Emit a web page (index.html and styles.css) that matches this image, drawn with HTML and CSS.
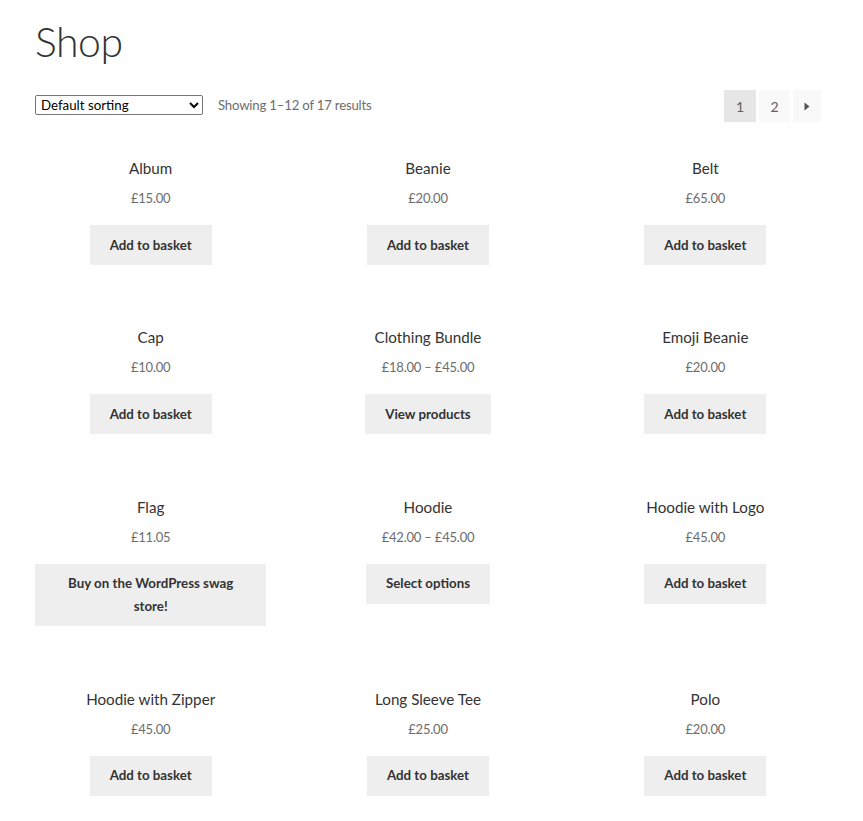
FILE: index.html
```html
<!DOCTYPE html>
<html lang="en">
<head>
<meta charset="utf-8">
<title>Shop</title>
<link rel="stylesheet" href="styles.css">
</head>
<body>
<main class="page">
  <h1 class="page-title">Shop</h1>
  <div class="toolbar">
    <select class="orderby">
      <option>Default sorting</option>
      <option>Sort by popularity</option>
      <option>Sort by latest</option>
    </select>
    <p class="result-count">Showing 1–12 of 17 results</p>
    <nav class="pagination">
      <span class="page-num current">1</span>
      <a class="page-num" href="#">2</a>
      <a class="page-num next" href="#"><svg width="6" height="9" viewBox="0 0 6 9"><path d="M0.5 0.5 L5.5 4.5 L0.5 8.5 Z" fill="#555"/></svg></a>
    </nav>
  </div>
  <ul class="products">
    <li class="product"><h2 class="title">Album</h2><span class="price">£15.00</span><a class="button" href="#">Add to basket</a></li>
    <li class="product"><h2 class="title">Beanie</h2><span class="price">£20.00</span><a class="button" href="#">Add to basket</a></li>
    <li class="product"><h2 class="title">Belt</h2><span class="price">£65.00</span><a class="button" href="#">Add to basket</a></li>
    <li class="product"><h2 class="title">Cap</h2><span class="price">£10.00</span><a class="button" href="#">Add to basket</a></li>
    <li class="product"><h2 class="title">Clothing Bundle</h2><span class="price">£18.00 – £45.00</span><a class="button" href="#">View products</a></li>
    <li class="product"><h2 class="title">Emoji Beanie</h2><span class="price">£20.00</span><a class="button" href="#">Add to basket</a></li>
    <li class="product"><h2 class="title">Flag</h2><span class="price">£11.05</span><a class="button" href="#">Buy on the WordPress swag store!</a></li>
    <li class="product"><h2 class="title">Hoodie</h2><span class="price">£42.00 – £45.00</span><a class="button" href="#">Select options</a></li>
    <li class="product"><h2 class="title">Hoodie with Logo</h2><span class="price">£45.00</span><a class="button" href="#">Add to basket</a></li>
    <li class="product"><h2 class="title">Hoodie with Zipper</h2><span class="price">£45.00</span><a class="button" href="#">Add to basket</a></li>
    <li class="product"><h2 class="title">Long Sleeve Tee</h2><span class="price">£25.00</span><a class="button" href="#">Add to basket</a></li>
    <li class="product"><h2 class="title">Polo</h2><span class="price">£20.00</span><a class="button" href="#">Add to basket</a></li>
  </ul>
</main>
</body>
</html>
```
FILE: styles.css
```css
* { box-sizing: border-box; }
body {
  margin: 0;
  background: #fff;
  color: #333;
  font-family: Lato, "Liberation Sans", sans-serif;
}
.page {
  padding: 0 42px 0 35px;
}
.page-title {
  margin: 0;
  padding-top: 16px;
  font-size: 41px;
  line-height: 52px;
  font-weight: 300;
  color: #333;
  letter-spacing: -0.5px;
}
.toolbar {
  display: flex;
  align-items: center;
  margin-top: 22px;
  height: 32px;
}
.orderby {
  width: 168px;
  height: 20px;
  font-family: Lato, "Liberation Sans", sans-serif;
  font-size: 13.3px;
  color: #000;
  background: #fff;
  border: 1px solid #767676;
  border-radius: 2px;
  padding: 0 1px;
  margin-top: -2px;
}
.result-count {
  margin: -2px 0 0 15px;
  font-size: 13.2px;
  letter-spacing: -0.2px;
  color: #6d6d6d;
}
.pagination {
  margin-left: auto;
  display: flex;
  gap: 3px;
}
.page-num {
  display: flex;
  align-items: center;
  justify-content: center;
  height: 32px;
  min-width: 31px;
  padding: 0 10px;
  background: #f9f9f9;
  color: #606060;
  font-size: 14px;
  text-decoration: none;
}
.page-num.current {
  background: #e6e6e6;
  min-width: 32px;
}
.page-num.next {
  min-width: 28px;
}
.products {
  list-style: none;
  margin: 33px 0 0;
  padding: 0;
  display: grid;
  grid-template-columns: repeat(3, 1fr);
  column-gap: 46px;
  row-gap: 59.4px;
  align-items: start;
}
.product {
  display: flex;
  flex-direction: column;
  align-items: center;
  text-align: center;
}
.title {
  margin: 0 0 4px;
  font-size: 15.2px;
  line-height: 26px;
  font-weight: 400;
  color: #333;
}
.price {
  font-size: 13px;
  letter-spacing: -0.2px;
  line-height: 26px;
  color: #6d6d6d;
  margin-bottom: 14px;
}
.button {
  display: block;
  background: #eee;
  color: #333;
  font-weight: 700;
  font-size: 13.3px;
  line-height: 22.7px;
  padding: 8.65px 19.8px;
  text-decoration: none;
}
```
